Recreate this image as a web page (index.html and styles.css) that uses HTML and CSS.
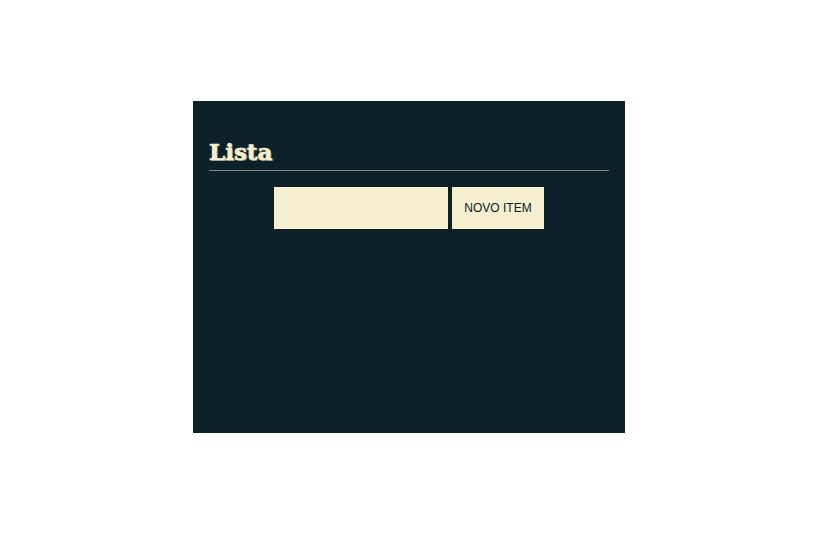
FILE: index.html
```html
<!DOCTYPE html>
<html lang="pt">
<head>
<meta charset="utf-8">
<title>Lista</title>
<link rel="stylesheet" href="styles.css">
</head>
<body>
<main class="app">
  <h1 class="title">Lista</h1>
  <form class="add-form">
    <input class="add-input" type="text">
    <button class="add-btn" type="button">NOVO ITEM</button>
  </form>
</main>
</body>
</html>
```
FILE: styles.css
```css
html, body {
  margin: 0;
  padding: 0;
  background: #ffffff;
}
body {
  padding-top: 101px;
  font-family: "Liberation Sans", Arial, sans-serif;
}
.app {
  box-sizing: border-box;
  width: 432px;
  height: 332px;
  margin-left: 193px;
  background: #0d2128;
  padding: 39px 16px 0;
}
.title {
  margin: 0;
  padding: 0 0 6px;
  font-family: "DejaVu Serif", serif;
  font-weight: bold;
  font-size: 23px;
  line-height: 24px;
  color: #f5efd0;
  -webkit-text-stroke: 0.6px #f5efd0;
  text-shadow: 1px 1px 0 #8a8570;
  border-bottom: 1px solid #858a80;
}
.add-form {
  display: flex;
  justify-content: center;
  gap: 4px;
  margin-top: 16px;
}
.add-input {
  box-sizing: border-box;
  width: 174px;
  height: 42px;
  border: none;
  margin: 0;
  padding: 0 8px;
  background: #f5efd0;
  outline: none;
}
.add-btn {
  box-sizing: border-box;
  width: 92px;
  height: 42px;
  border: none;
  margin: 0;
  padding: 0;
  background: #f5efd0;
  color: #0d1a22;
  font-family: "Liberation Sans", Arial, sans-serif;
  font-size: 12px;
}
```
